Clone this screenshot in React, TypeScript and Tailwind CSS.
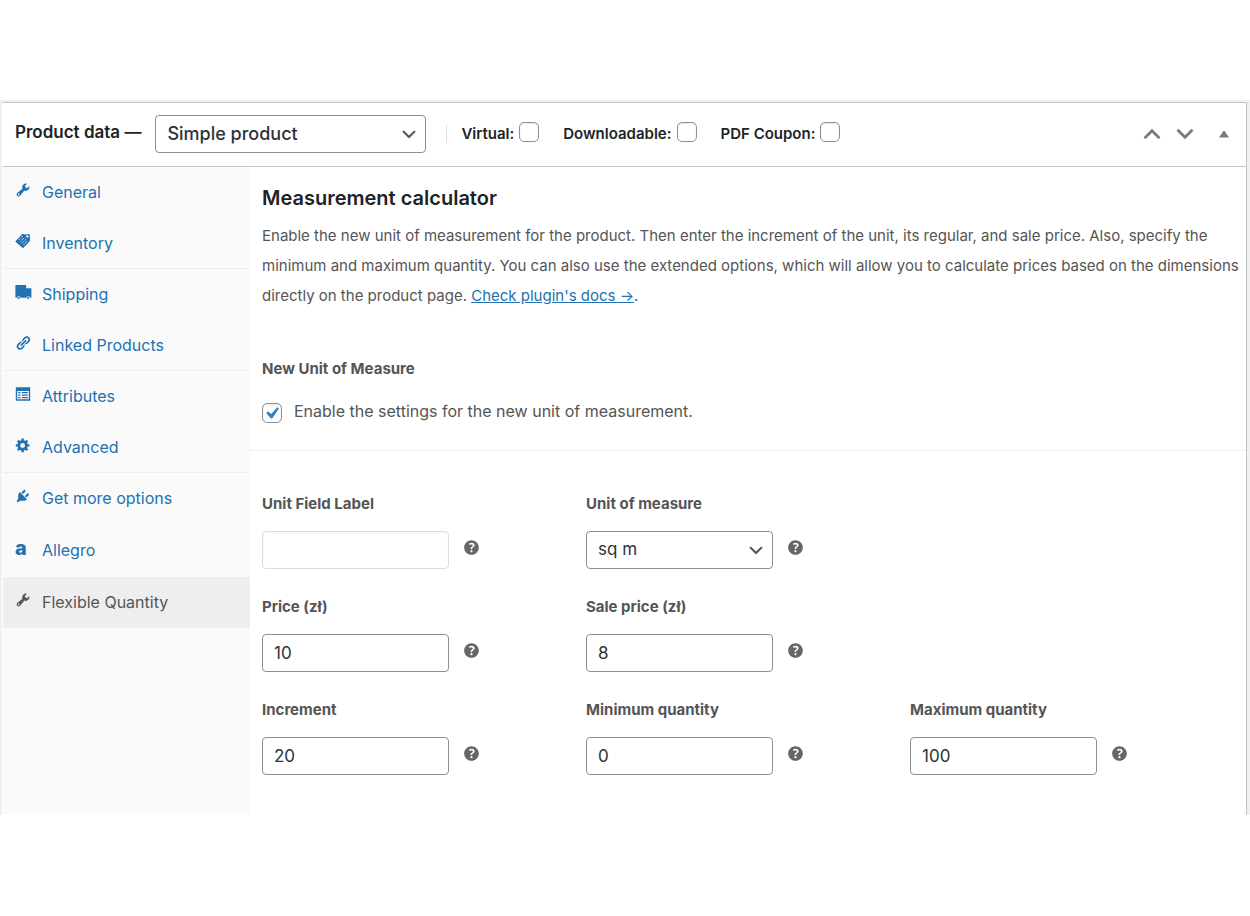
import React from "react";

const TOOLS =
  "M16.68 9.77c-1.34 1.34-3.3 1.67-4.95.99l-5.41 6.52c-.99.99-2.59.99-3.58 0s-.99-2.59 0-3.57l6.52-5.42c-.68-1.65-.35-3.61.99-4.95 1.28-1.28 3.12-1.62 4.72-1.06l-2.89 2.89 2.82 2.82 2.86-2.87c.53 1.58.18 3.39-1.08 4.65zM3.81 16.21c.4.39 1.04.39 1.43 0 .4-.4.4-1.04 0-1.43-.39-.4-1.03-.4-1.43 0-.39.39-.39 1.03 0 1.43z";
const GEAR =
  "M18 12h-2.18c-.17.7-.44 1.35-.81 1.93l1.54 1.54-2.1 2.1-1.54-1.54c-.58.36-1.23.63-1.91.79V19H8v-2.18c-.68-.16-1.33-.43-1.91-.79l-1.54 1.54-2.12-2.12 1.54-1.54c-.36-.58-.63-1.23-.79-1.91H1V9.03h2.17c.16-.7.44-1.35.8-1.94L2.43 5.55l2.1-2.1 1.54 1.54c.58-.37 1.24-.64 1.93-.81V2h3v2.18c.68.16 1.33.43 1.91.79l1.54-1.54 2.12 2.12-1.54 1.54c.36.59.64 1.24.8 1.94H18V12zm-8.5 1.5c1.66 0 3-1.34 3-3s-1.34-3-3-3-3 1.34-3 3 1.34 3 3 3z";
const LINK =
  "M17.74 2.76c1.68 1.69 1.68 4.41 0 6.1l-1.53 1.52c-1.12 1.12-2.7 1.47-4.14 1.09l2.62-2.61.76-.77.76-.76c.84-.84.84-2.2 0-3.04-.84-.85-2.2-.85-3.04 0l-.77.76-3.38 3.38c-.37-1.44-.02-3.02 1.1-4.14l1.52-1.53c1.69-1.68 4.42-1.68 6.1 0zM8.59 13.43l5.34-5.34c.42-.42.42-1.1 0-1.52-.44-.43-1.13-.39-1.53 0l-5.33 5.34c-.42.42-.42 1.1 0 1.52.44.43 1.13.39 1.52 0zm-.76 2.29l4.14-4.15c.38 1.44.03 3.02-1.09 4.14l-1.52 1.53c-1.69 1.68-4.41 1.68-6.1 0-1.68-1.68-1.68-4.42 0-6.1l1.53-1.52c1.12-1.12 2.7-1.47 4.14-1.1l-4.14 4.15c-.85.84-.85 2.2 0 3.05.84.84 2.2.84 3.04 0z";
const HELP =
  "M17 10c0-3.87-3.14-7-7-7-3.87 0-7 3.13-7 7s3.13 7 7 7c3.86 0 7-3.13 7-7zm-6.3 1.48H9.14v-.43c0-.38.08-.7.24-.98s.46-.57.88-.89c.41-.29.68-.53.81-.71.14-.18.2-.39.2-.62 0-.25-.09-.44-.28-.58-.19-.13-.45-.19-.79-.19-.58 0-1.25.15-2 .46l-.64-1.28c.87-.49 1.8-.74 2.77-.74.81 0 1.45.2 1.92.58.48.39.71.91.71 1.55 0 .43-.09.8-.29 1.11-.19.32-.57.67-1.11 1.06-.38.28-.61.49-.71.63-.1.15-.15.34-.15.57v.46zm-1.47 2.74c-.18-.17-.27-.42-.27-.73 0-.33.08-.58.26-.75s.43-.25.77-.25c.32 0 .57.09.75.26s.27.42.27.74c0 .3-.09.55-.27.72-.18.18-.43.27-.75.27-.33 0-.58-.09-.76-.26z";

const glyph = (d: string) => (
  <svg viewBox="0 0 20 20" className="size-4 fill-current" aria-hidden="true">
    <path d={d} />
  </svg>
);

const tagIcon = (
  <svg viewBox="0 0 16 16" className="size-4 fill-current" aria-hidden="true">
    <path fillRule="evenodd" d="M7.6.8 10 1.6 14.6.9 15 5.6 14.8 8.2 8 15.2.2 8.4zM12.4 2.2a1.2 1.2 0 1 0 0 2.4 1.2 1.2 0 0 0 0-2.4z" />
    <path
      d="M7.6 3.2 3.4 7.4M9.2 4.8 5 9M10.8 6.4 6.6 10.6M12.4 8 8.2 12.2"
      stroke="#fafafa"
      strokeWidth="0.9"
      strokeDasharray="1.2 0.8"
      fill="none"
    />
  </svg>
);

const truckIcon = (
  <svg viewBox="0 0 17 16" className="h-4 w-[17px] fill-current" aria-hidden="true">
    <path d="M.4 1h10.8v3.2h5.2v9.5h-1.2a2 2 0 0 0-3.9 0H5.6a2 2 0 0 0-3.9 0H.4z" />
    <circle cx="3.6" cy="14" r="1.1" />
    <circle cx="13.2" cy="14" r="1.1" />
  </svg>
);

const listIcon = (
  <svg viewBox="0 0 16 16" className="size-4 fill-current" aria-hidden="true">
    <path
      fillRule="evenodd"
      d="M.8 1.2h14.4v13.6H.8zM2.2 5v8.2h11.6V5zM3.2 6h2.3v1.3H3.2zM6.8 6h6v1.2h-6zM3.2 8.5h2.3v1.3H3.2zM6.8 8.5h6v1.2h-6zM3.2 11h2.3v1.3H3.2zM6.8 11h6v1.2h-6z"
    />
  </svg>
);

const plugIcon = (
  <svg viewBox="0 0 20 20" className="size-4 fill-current" aria-hidden="true">
    <path d="M13.11 4.36 9.87 7.6 8 5.73l3.24-3.24c.35-.34 1.05-.2 1.56.32.52.51.66 1.21.31 1.55zm-8 1.77.91-1.12 9.01 9.01-1.19.84c-.71.71-2.63 1.16-3.82 1.16H6.14L4.9 17.26c-.59.59-1.54.59-2.12 0a1.49 1.49 0 0 1 0-2.12l1.24-1.24v-3.88c0-1.13.4-3.19 1.09-3.89zm7.26 3.97 3.24-3.24c.34-.35 1.04-.21 1.55.31.52.51.66 1.21.31 1.55l-3.24 3.25z" />
  </svg>
);

type Tab = { label: string; icon: React.ReactNode; height?: string; state?: string };

const TABS: Tab[] = [
  { label: "General", icon: glyph(TOOLS) },
  { label: "Inventory", icon: tagIcon, state: "border-b border-[#eee] text-[#2271b1]" },
  { label: "Shipping", icon: truckIcon },
  { label: "Linked Products", icon: glyph(LINK), state: "border-b border-[#eee] text-[#2271b1]" },
  { label: "Attributes", icon: listIcon },
  { label: "Advanced", icon: glyph(GEAR), state: "border-b border-[#eee] text-[#2271b1]" },
  { label: "Get more options", icon: plugIcon },
  {
    label: "Allegro",
    icon: <span className="text-xl leading-4 font-extrabold">a</span>,
    height: "h-[53px]",
  },
  { label: "Flexible Quantity", icon: glyph(TOOLS), state: "bg-[#eee] text-[#555]" },
];

function Check({ id, checked = false }: { id: string; checked?: boolean }) {
  return (
    <span className="grid size-5 shrink-0">
      <input
        id={id}
        type="checkbox"
        defaultChecked={checked}
        className="peer col-start-1 row-start-1 size-5 appearance-none rounded-[5px] border border-[#8c8f94] bg-white shadow-[inset_0_1px_2px_rgba(0,0,0,0.1)]"
      />
      <svg
        viewBox="0 0 20 20"
        className="pointer-events-none invisible col-start-1 row-start-1 size-5 fill-[#3582c4] peer-checked:visible"
        aria-hidden="true"
      >
        <path d="M15.2 4.2l1.7 1.2-6.6 10H8.8L4.2 9.9l1.8-1.7 3.3 2.8z" />
      </svg>
    </span>
  );
}

function SelectBox({ id, value, className, label }: { id: string; value: string; className: string; label?: string }) {
  return (
    <span className="grid w-full items-center">
      <select
        id={id}
        aria-label={label}
        className={
          "col-start-1 row-start-1 w-full appearance-none rounded border border-[#8c8f94] bg-white pl-[11px] text-[#2c3338] " +
          className
        }
      >
        <option>{value}</option>
      </select>
      <svg
        viewBox="0 0 20 20"
        className="pointer-events-none col-start-1 row-start-1 mr-2 size-[18px] justify-self-end fill-[#50575e]"
        aria-hidden="true"
      >
        <path d="M4.2 6 10 11.8 15.8 6 17.5 7.4 10 15 2.5 7.4z" />
      </svg>
    </span>
  );
}

function Field({ id, label, value, kind = "text" }: { id: string; label: string; value: string; kind?: "text" | "empty" | "select" }) {
  return (
    <div className="flex min-w-0 flex-col gap-[15px]">
      <label htmlFor={id} className="text-[15px] leading-6 font-bold text-[#555]">
        {label}
      </label>
      <div className="flex items-start gap-3">
        <div className="flex w-[187px]">
          {kind === "select" ? (
            <SelectBox id={id} value={value} className="h-[38px] text-[17px]" />
          ) : (
            <input
              id={id}
              type="text"
              defaultValue={value}
              className={
                kind === "empty"
                  ? "h-[38px] w-full rounded border border-[#dcdcde] bg-white px-[11px] text-[17px] text-[#2c3338] shadow-[inset_0_1px_2px_rgba(0,0,0,0.04)]"
                  : "h-[38px] w-full rounded border border-[#8c8f94] bg-white px-[11px] text-[17px] text-[#2c3338]"
              }
            />
          )}
        </div>
        <button type="button" aria-label={"Help: " + label} className="mt-1.5 text-[#666]">
          <svg viewBox="0 0 20 20" className="size-[21px] fill-current" aria-hidden="true">
            <path d={HELP} />
          </svg>
        </button>
      </div>
    </div>
  );
}

export default function App() {
  return (
    <div className="min-h-screen bg-white py-[100px] font-['Inter',sans-serif]">
      <div className="bg-[#f0f0f1] pt-0.5 pr-[3px] pl-0.5">
        <section className="border-t border-r border-l border-t-[#c3c4c7] border-r-[#c3c4c7] border-l-white bg-white">
          <header className="flex h-16 items-center border-b border-[#c3c4c7] pr-4 pb-px pl-3">
            <h2 className="pb-1 text-[17px] leading-6 font-semibold whitespace-nowrap text-[#1d2327]">Product data —</h2>
            <div className="ml-3.5 flex w-[271px]">
              <SelectBox
                id="type"
                label="Product type"
                value="Simple product"
                className="h-[38px] text-lg font-medium"
              />
            </div>
            <span className="ml-5 h-[18px] w-px bg-[#dcdcde]" />
            <div className="ml-3.5 flex items-center gap-6 pb-0.5 text-[15px] leading-5 font-semibold text-[#1d2327]">
              {[
                ["virtual", "Virtual:"],
                ["downloadable", "Downloadable:"],
                ["coupon", "PDF Coupon:"],
              ].map(([id, text]) => (
                <div key={id} className="flex items-start gap-[5px]">
                  <label htmlFor={id} className="pt-0.5 whitespace-nowrap">
                    {text}
                  </label>
                  <Check id={id} />
                </div>
              ))}
            </div>
            <div className="ml-auto flex items-center text-[#787c82]">
              <button type="button" aria-label="Move up" className="mr-[15px]">
                <svg viewBox="0 0 18 12" className="h-3 w-[18px] fill-none stroke-current" strokeWidth="2.8" aria-hidden="true">
                  <path d="M1.5 10.2 9 2.8l7.5 7.4" />
                </svg>
              </button>
              <button type="button" aria-label="Move down" className="mr-6">
                <svg viewBox="0 0 18 12" className="h-3 w-[18px] fill-none stroke-current" strokeWidth="2.8" aria-hidden="true">
                  <path d="M1.5 1.8 9 9.2l7.5-7.4" />
                </svg>
              </button>
              <button type="button" aria-label="Toggle panel">
                <svg viewBox="0 0 12 8" className="h-2 w-3 fill-current" aria-hidden="true">
                  <path d="M1 7.6 5 1.4Q6 .2 7 1.4l4 6.2z" />
                </svg>
              </button>
            </div>
          </header>

          <div className="flex">
            <nav aria-label="Product data" className="w-[247px] shrink-0 bg-[#fafafa] text-base">
              <ul>
                {TABS.map((tab) => (
                  <li key={tab.label}>
                    <a
                      href="#"
                      className={
                        "flex items-center pb-px pl-3 " +
                        (tab.height ?? "h-[51px]") +
                        " " +
                        (tab.state ?? "text-[#2271b1]")
                      }
                    >
                      <span className="mb-1 flex w-[27px] shrink-0">{tab.icon}</span>
                      {tab.label}
                    </a>
                  </li>
                ))}
              </ul>
            </nav>

            <main className="min-w-0 flex-1 pb-10 text-[#555]">
              <div className="border-b border-[#eee] pt-[15px] pr-1.5 pb-[27px] pl-3">
                <h3 className="text-xl leading-8 font-semibold text-[#1d2327]">Measurement calculator</h3>
                <div className="mt-[7px] text-[15px] leading-[30px]">
                  Enable the new unit of measurement for the product. Then enter the increment of the unit, its regular, and
                  sale price. Also, specify the minimum and maximum quantity. You can also use the extended options, which
                  will allow you to calculate prices based on the dimensions directly on the product page.{" "}
                  <a href="#" className="text-[#2271b1] underline">
                    Check plugin's docs →
                  </a>
                  .
                </div>
                <h4 className="mt-[46px] text-[15px] leading-6 font-bold">New Unit of Measure</h4>
                <div className="mt-[18px] flex items-end gap-3">
                  <Check id="enable" checked />
                  <label htmlFor="enable" className="text-base leading-6">
                    Enable the settings for the new unit of measurement.
                  </label>
                </div>
              </div>
              <form className="grid grid-cols-[324px_324px_1fr] gap-y-[26px] px-3 pt-[41px]">
                <Field id="unit-label" label="Unit Field Label" value="" kind="empty" />
                <Field id="unit" label="Unit of measure" value="sq m" kind="select" />
                <span />
                <Field id="price" label="Price (zł)" value="10" />
                <Field id="sale" label="Sale price (zł)" value="8" />
                <span />
                <Field id="increment" label="Increment" value="20" />
                <Field id="min" label="Minimum quantity" value="0" />
                <Field id="max" label="Maximum quantity" value="100" />
              </form>
            </main>
          </div>
        </section>
      </div>
    </div>
  );
}
